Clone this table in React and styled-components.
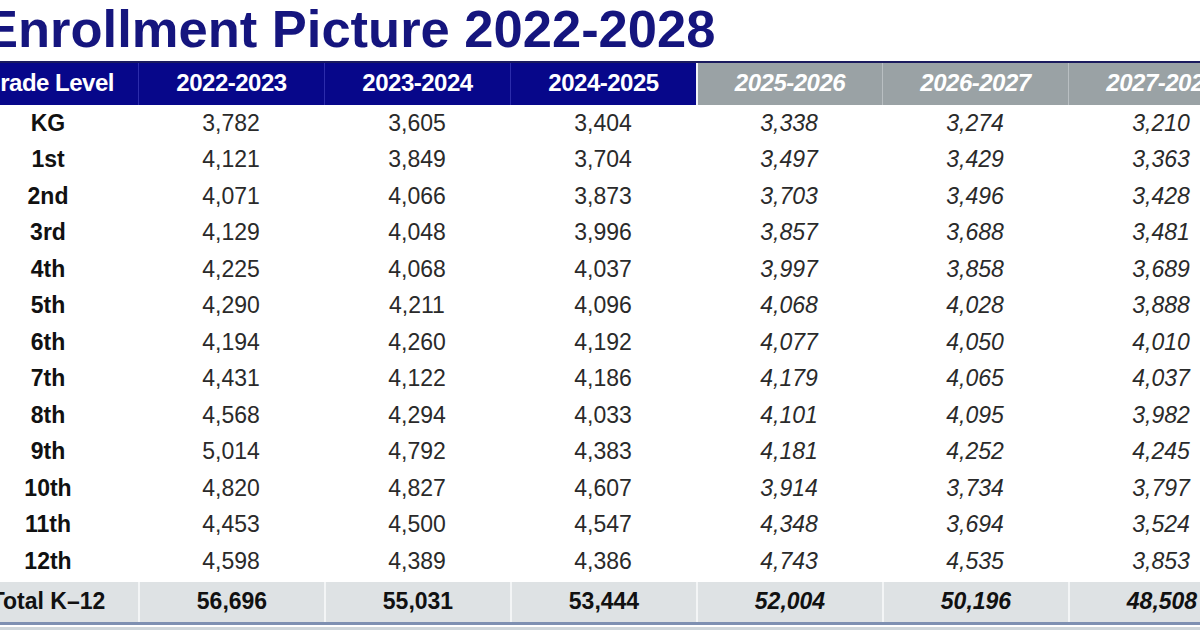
import styled, { createGlobalStyle } from 'styled-components';

const GlobalStyle = createGlobalStyle`
  html, body {
    margin: 0;
    padding: 0;
    background: #ffffff;
    overflow: hidden;
  }
  body {
    font-family: "Liberation Sans", Arial, sans-serif;
  }
`;

const Page = styled.div`
  width: 1200px;
  height: 630px;
  overflow: hidden;
  background: #ffffff;
`;

const Title = styled.h1`
  margin: 0 0 0 -17px;
  height: 58px;
  font-size: 52.5px;
  line-height: 58px;
  font-weight: 700;
  color: #15157e;
  white-space: nowrap;
`;

const Table = styled.div`
  margin-top: 3px;
  margin-left: -42px;
  width: 1296px;
`;

const Grid = styled.div`
  display: grid;
  grid-template-columns: 180px repeat(6, 186px);
`;

const HeaderRow = styled(Grid)`
  height: 44px;
  border-top: 2px solid #1b1b5e;
  box-sizing: border-box;
`;

const HeadCell = styled.div`
  display: flex;
  align-items: center;
  justify-content: center;
  padding-bottom: 3px;
  box-sizing: border-box;
  background: ${p => (p.$tone === 'gray' ? '#9aa2a5' : '#07078a')};
  border-left: ${p =>
    p.$first ? 'none' : p.$join ? '2px solid #f2f4f8' : p.$tone === 'gray' ? '1px solid #b9bfc2' : '1px solid #2c2cab'};
  color: #ffffff;
  font-size: 24px;
  font-weight: 700;
  letter-spacing: -0.5px;
  font-style: ${p => (p.$italic ? 'italic' : 'normal')};
  white-space: nowrap;
`;

const Row = styled(Grid)`
  height: 36.5px;
`;

const Cell = styled.div`
  display: flex;
  align-items: center;
  justify-content: center;
  font-size: 23px;
  font-weight: ${p => (p.$label ? 700 : 400)};
  font-style: ${p => (p.$italic ? 'italic' : 'normal')};
  color: ${p => (p.$label ? '#111111' : '#2a2a2a')};
  white-space: nowrap;
`;

const TotalRow = styled(Grid)`
  margin-top: 2px;
  height: 43px;
  background: #dee2e4;
  border-bottom: 3px solid #7e90b2;
  box-sizing: border-box;
`;

const TotalCell = styled.div`
  display: flex;
  align-items: center;
  justify-content: center;
  border-left: ${p => (p.$first ? 'none' : '2px solid #f3f5f6')};
  font-size: 23px;
  font-weight: 700;
  font-style: ${p => (p.$italic ? 'italic' : 'normal')};
  color: #111111;
  white-space: nowrap;
`;

const BottomRule = styled.div`
  margin-top: 2px;
  height: 4px;
  background: #cfd6db;
`;

const years = ['2022-2023', '2023-2024', '2024-2025', '2025-2026', '2026-2027', '2027-2028'];

const rows = [
  ['KG', '3,782', '3,605', '3,404', '3,338', '3,274', '3,210'],
  ['1st', '4,121', '3,849', '3,704', '3,497', '3,429', '3,363'],
  ['2nd', '4,071', '4,066', '3,873', '3,703', '3,496', '3,428'],
  ['3rd', '4,129', '4,048', '3,996', '3,857', '3,688', '3,481'],
  ['4th', '4,225', '4,068', '4,037', '3,997', '3,858', '3,689'],
  ['5th', '4,290', '4,211', '4,096', '4,068', '4,028', '3,888'],
  ['6th', '4,194', '4,260', '4,192', '4,077', '4,050', '4,010'],
  ['7th', '4,431', '4,122', '4,186', '4,179', '4,065', '4,037'],
  ['8th', '4,568', '4,294', '4,033', '4,101', '4,095', '3,982'],
  ['9th', '5,014', '4,792', '4,383', '4,181', '4,252', '4,245'],
  ['10th', '4,820', '4,827', '4,607', '3,914', '3,734', '3,797'],
  ['11th', '4,453', '4,500', '4,547', '4,348', '3,694', '3,524'],
  ['12th', '4,598', '4,389', '4,386', '4,743', '4,535', '3,853'],
];

const totals = ['56,696', '55,031', '53,444', '52,004', '50,196', '48,508'];

const App = () => {
  return (
    <Page>
      <GlobalStyle />
      <Title>Enrollment Picture 2022-2028</Title>
      <Table>
        <HeaderRow>
          <HeadCell $first>Grade Level</HeadCell>
          {years.map((y, i) => (
            <HeadCell key={y} $tone={i >= 3 ? 'gray' : 'blue'} $italic={i >= 3} $join={i === 3}>
              {y}
            </HeadCell>
          ))}
        </HeaderRow>
        {rows.map(r => (
          <Row key={r[0]}>
            <Cell $label>{r[0]}</Cell>
            {r.slice(1).map((v, i) => (
              <Cell key={i} $italic={i >= 3}>{v}</Cell>
            ))}
          </Row>
        ))}
        <TotalRow>
          <TotalCell $first>Total K–12</TotalCell>
          {totals.map((v, i) => (
            <TotalCell key={i} $italic={i >= 3}>{v}</TotalCell>
          ))}
        </TotalRow>
        <BottomRule />
      </Table>
    </Page>
  );
};

export default App;
